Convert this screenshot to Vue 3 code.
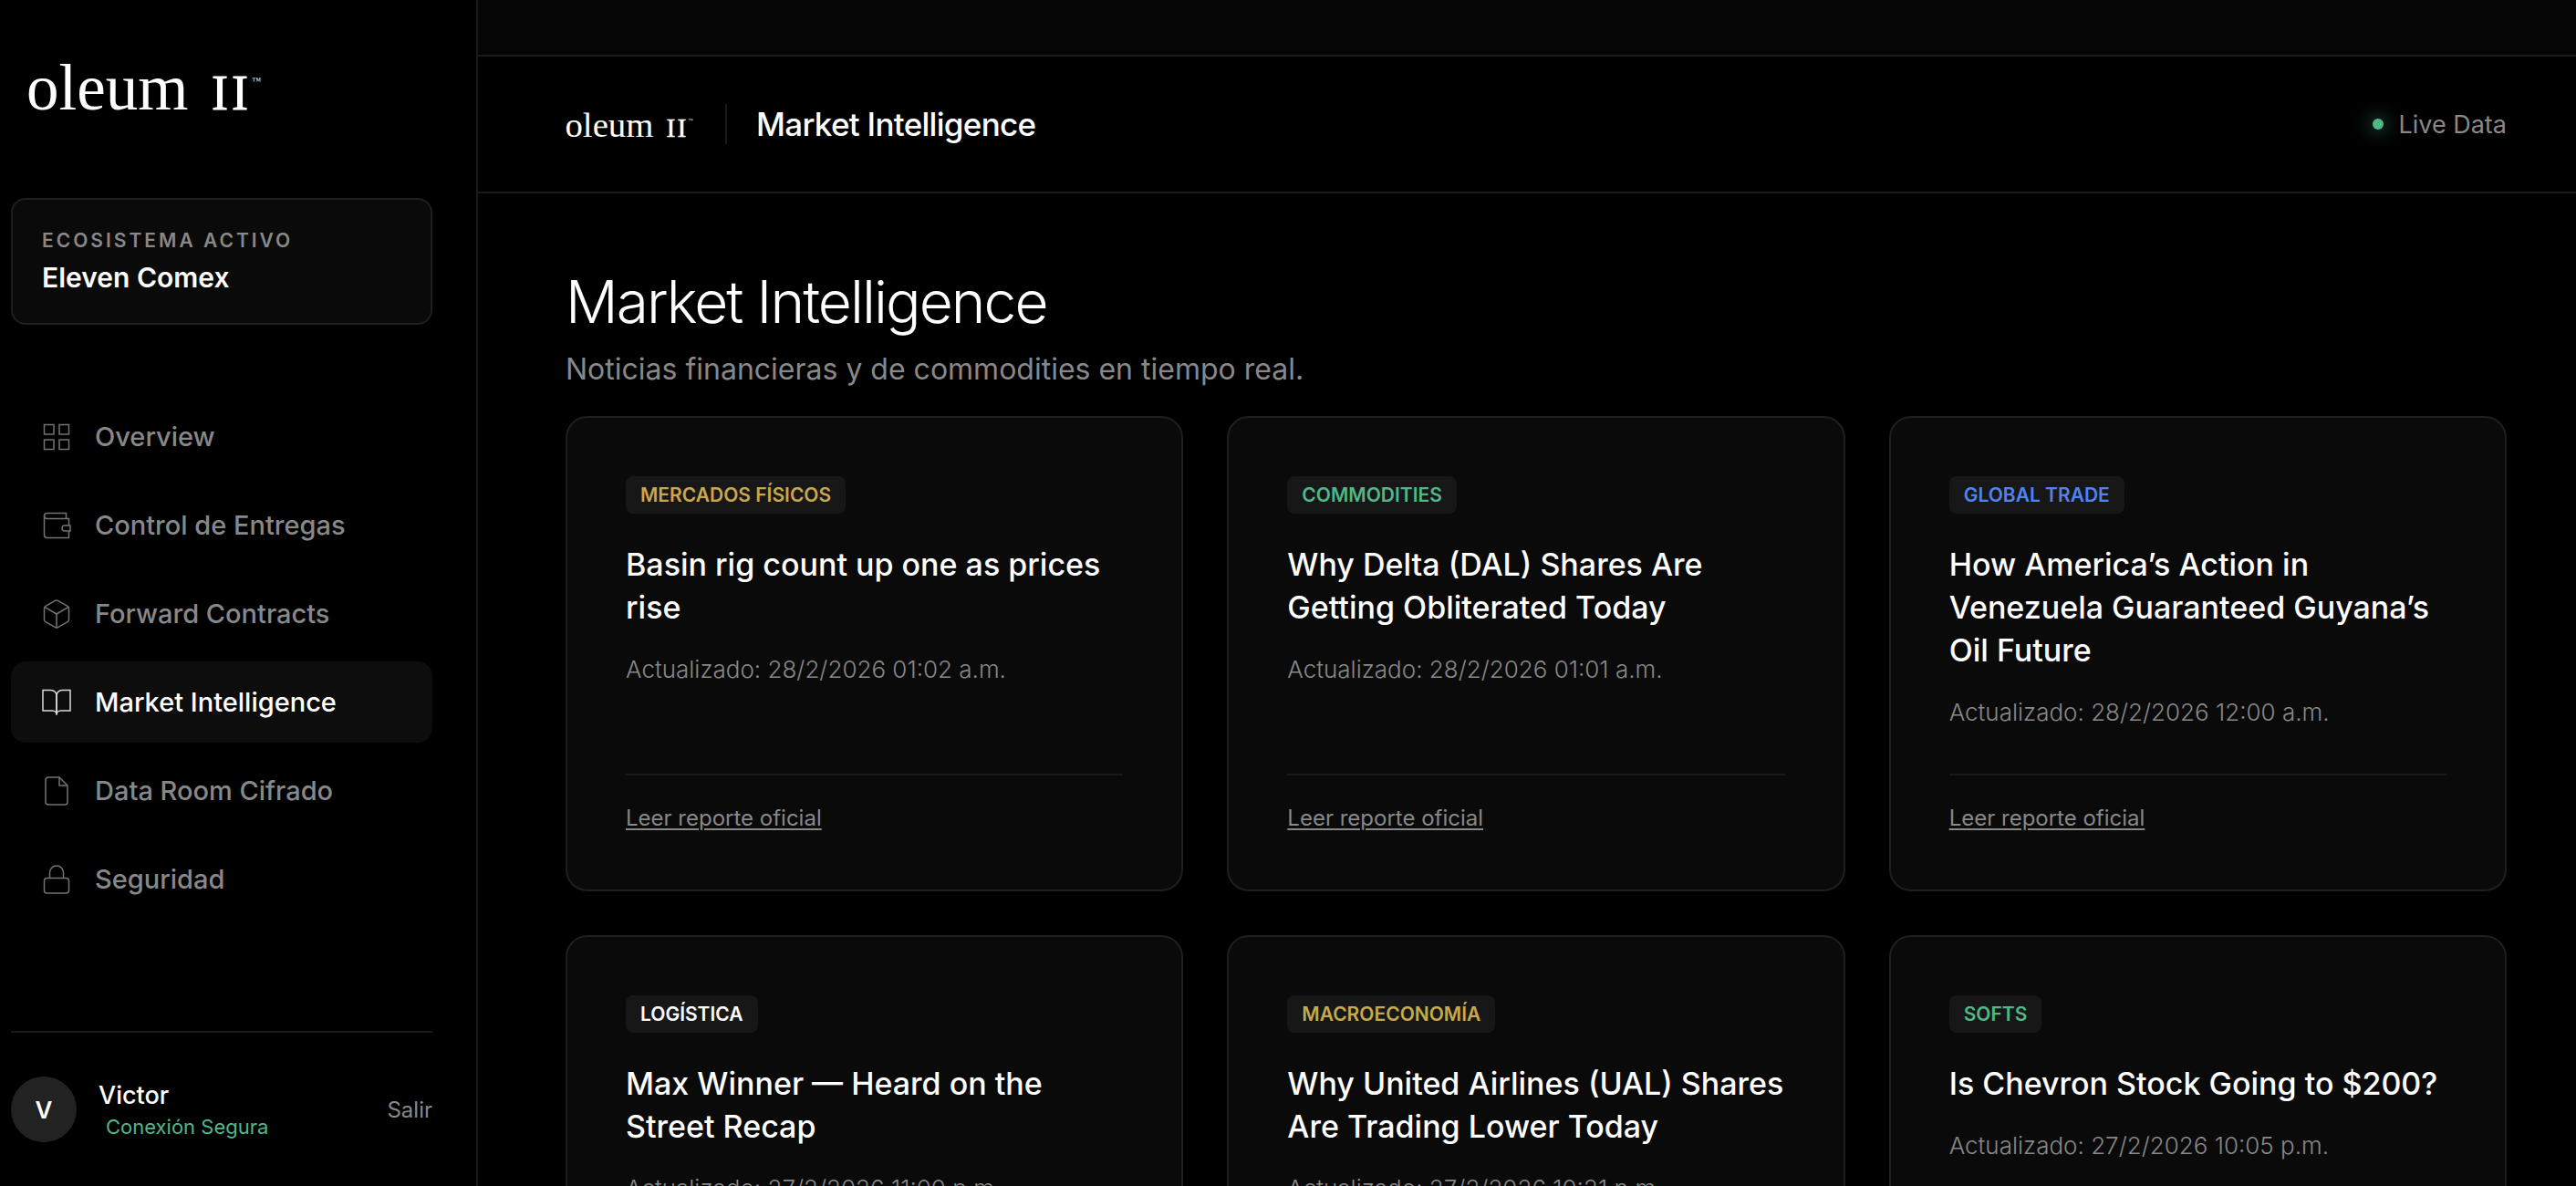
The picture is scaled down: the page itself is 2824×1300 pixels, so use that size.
<script setup>
import { ref } from 'vue'

const navItems = [
  { id: 'overview', label: 'Overview' },
  { id: 'entregas', label: 'Control de Entregas' },
  { id: 'forward', label: 'Forward Contracts' },
  { id: 'market', label: 'Market Intelligence' },
  { id: 'dataroom', label: 'Data Room Cifrado' },
  { id: 'seguridad', label: 'Seguridad' },
]
const active = ref('market')

const news = [
  { tag: 'Mercados Físicos', tone: 'gold', title: 'Basin rig count up one as prices rise', date: '28/2/2026 01:02 a.m.' },
  { tag: 'Commodities', tone: 'green', title: 'Why Delta (DAL) Shares Are Getting Obliterated Today', date: '28/2/2026 01:01 a.m.' },
  { tag: 'Global Trade', tone: 'blue', title: 'How America’s Action in Venezuela Guaranteed Guyana’s Oil Future', date: '28/2/2026 12:00 a.m.' },
  { tag: 'Logística', tone: 'white', title: 'Max Winner — Heard on the Street Recap', date: '27/2/2026 11:00 p.m.' },
  { tag: 'Macroeconomía', tone: 'gold', title: 'Why United Airlines (UAL) Shares Are Trading Lower Today', date: '27/2/2026 10:21 p.m.' },
  { tag: 'Softs', tone: 'green', title: 'Is Chevron Stock Going to $200?', date: '27/2/2026 10:05 p.m.' },
]
</script>

<template>
  <div class="layout">
    <aside class="sidebar">
      <!-- wordmark -->
      <svg class="logo" viewBox="0 0 256 54" role="img" aria-label="oleum II">
        <text class="logo-word" x="-1" y="52">oleum</text>
        <text class="logo-num" x="202" y="52">I</text>
        <text class="logo-num" x="224" y="52">I</text>
        <text class="logo-tm" x="246" y="24">™</text>
      </svg>

      <div class="ecosystem">
        <p class="ecosystem-label">Ecosistema activo</p>
        <p class="ecosystem-name">Eleven Comex</p>
      </div>

      <nav class="nav">
        <a
          v-for="item in navItems"
          :key="item.id"
          href="#"
          class="nav-item"
          :class="{ active: active === item.id }"
          @click.prevent="active = item.id"
        >
          <svg class="nav-icon" viewBox="0 0 24 24">
            <template v-if="item.id === 'overview'">
              <rect x="3" y="3" width="7" height="7" />
              <rect x="14" y="3" width="7" height="7" />
              <rect x="14" y="14" width="7" height="7" />
              <rect x="3" y="14" width="7" height="7" />
            </template>
            <template v-else-if="item.id === 'entregas'">
              <path d="M19 7V3H5a2 2 0 0 0 0 4h16v5" />
              <path d="M3 5v14a2 2 0 0 0 2 2h16v-5" />
              <path d="M18 12a2 2 0 0 0 0 4h4v-4z" />
            </template>
            <template v-else-if="item.id === 'forward'">
              <path d="M21 16V8a2 2 0 0 0-1-1.73l-7-4a2 2 0 0 0-2 0l-7 4A2 2 0 0 0 3 8v8a2 2 0 0 0 1 1.73l7 4a2 2 0 0 0 2 0l7-4A2 2 0 0 0 21 16z" />
              <path d="M3.27 6.96L12 12.01l8.73-5.05" />
              <path d="M12 22.08V12" />
            </template>
            <template v-else-if="item.id === 'market'">
              <path d="M2 3h6a4 4 0 0 1 4 4v14a3 3 0 0 0-3-3H2z" />
              <path d="M22 3h-6a4 4 0 0 0-4 4v14a3 3 0 0 1 3-3h7z" />
            </template>
            <template v-else-if="item.id === 'dataroom'">
              <path d="M14 2H6a2 2 0 0 0-2 2v16a2 2 0 0 0 2 2h12a2 2 0 0 0 2-2V8z" />
              <path d="M14 2v6h6" />
            </template>
            <template v-else>
              <rect x="3" y="11" width="18" height="11" rx="2" />
              <path d="M7 11V7a5 5 0 0 1 10 0v4" />
            </template>
          </svg>
          {{ item.label }}
        </a>
      </nav>

      <div class="user">
        <div class="avatar">V</div>
        <div class="user-info">
          <p class="user-name">Victor</p>
          <p class="user-status">Conexión Segura</p>
        </div>
        <button class="logout" type="button">Salir</button>
      </div>
    </aside>

    <main class="main">
      <div class="topbar"></div>
      <header class="header">
        <div class="header-left">
          <svg class="logo-small" viewBox="0 0 256 54" role="img" aria-label="oleum II">
            <text class="logo-word" x="-1" y="52">oleum</text>
            <text class="logo-num" x="202" y="52">I</text>
            <text class="logo-num" x="224" y="52">I</text>
            <text class="logo-tm" x="246" y="24">™</text>
          </svg>
          <span class="separator"></span>
          <span class="header-title">Market Intelligence</span>
        </div>
        <div class="live"><span class="dot"></span>Live Data</div>
      </header>

      <section class="content">
        <h1>Market Intelligence</h1>
        <p class="subtitle">Noticias financieras y de commodities en tiempo real.</p>

        <div class="grid">
          <article v-for="item in news" :key="item.title" class="card">
            <span class="tag" :class="item.tone">{{ item.tag }}</span>
            <h2>{{ item.title }}</h2>
            <p class="date">Actualizado: {{ item.date }}</p>
            <div class="card-footer">
              <a href="#" @click.prevent>Leer reporte oficial</a>
            </div>
          </article>
        </div>
      </section>
    </main>
  </div>
</template>

<style>
body {
  margin: 0;
  background: #000;
}
</style>

<style scoped>
.layout {
  display: flex;
  height: 100vh;
  background: #000;
  color: #fff;
  font-family: Inter, "Liberation Sans", sans-serif;
}
p,
h1,
h2 {
  margin: 0;
}

/* Sidebar */
.sidebar {
  display: flex;
  flex-direction: column;
  flex: 0 0 524px;
  box-sizing: border-box;
  padding: 68px 48px 48px 12px;
  border-right: 2px solid #1a1a1a;
}
.logo {
  width: 256px;
  height: 54px;
  margin: 0 0 95px 18px;
  overflow: visible;
}
.logo-word,
.logo-num,
.logo-tm {
  fill: #fff;
  font-family: "Liberation Serif", serif;
}
.logo-word {
  font-size: 71px;
}
.logo-num {
  font-size: 54px;
  stroke: #fff;
  stroke-width: 1;
}
.logo-tm {
  font-size: 10px;
}
.ecosystem {
  padding: 32px;
  border: 2px solid #1f1f1f;
  border-radius: 16px;
  background: #0a0a0a;
}
.ecosystem-label {
  color: #888;
  font-size: 21px;
  font-weight: 600;
  line-height: 25px;
  letter-spacing: 3px;
  text-transform: uppercase;
}
.ecosystem-name {
  margin-top: 10px;
  font-size: 30px;
  font-weight: 600;
  line-height: 36px;
}
.nav {
  display: flex;
  flex-direction: column;
  gap: 8px;
  margin-top: 78px;
}
.nav-item {
  display: flex;
  align-items: center;
  gap: 24px;
  height: 89px;
  padding: 0 32px;
  border-radius: 16px;
  color: #888;
  font-size: 29px;
  font-weight: 500;
  text-decoration: none;
}
.nav-item.active {
  background: #0d0d0d;
  color: #fff;
}
.nav-icon {
  width: 36px;
  height: 36px;
  fill: none;
  stroke: currentColor;
  stroke-width: 1;
  opacity: 0.85;
}
.user {
  display: flex;
  align-items: center;
  margin-top: auto;
  padding-top: 48px;
  border-top: 2px solid #1a1a1a;
}
.avatar {
  display: flex;
  align-items: center;
  justify-content: center;
  width: 72px;
  height: 72px;
  border-radius: 50%;
  background: #222;
  font-size: 26px;
  font-weight: 600;
}
.user-info {
  flex: 1;
  margin-left: 24px;
  padding-top: 2px;
}
.user-name {
  font-size: 27px;
  font-weight: 500;
  line-height: 36px;
}
.user-status {
  padding-left: 8px;
  color: #52b788;
  font-size: 22px;
  line-height: 32px;
}
.logout {
  padding: 0;
  border: none;
  background: none;
  color: #888;
  font-family: inherit;
  font-size: 24px;
  cursor: pointer;
}

/* Main */
.main {
  flex: 1;
  min-width: 0;
  overflow-y: auto;
  scrollbar-width: none;
}
.topbar {
  height: 60px;
  border-bottom: 2px solid #1a1a1a;
  background: #050505;
}
.header {
  display: flex;
  align-items: center;
  justify-content: space-between;
  padding: 48px 76px 48px 96px;
  border-bottom: 2px solid #1a1a1a;
}
.header-left {
  display: flex;
  align-items: center;
}
.logo-small {
  width: 140px;
  height: 30px;
  overflow: visible;
}
.separator {
  width: 2px;
  height: 44px;
  margin: 0 32px 0 35px;
  background: #1a1a1a;
}
.header-title {
  font-size: 35px;
  font-weight: 500;
  line-height: 52px;
  letter-spacing: -0.02em;
}
.live {
  display: flex;
  align-items: center;
  gap: 16px;
  color: #888;
  font-size: 27px;
}
.dot {
  width: 12px;
  height: 12px;
  border-radius: 50%;
  background: #52b788;
  box-shadow: 0 0 20px #52b788;
}
.content {
  padding: 80px 76px 80px 96px;
}
h1 {
  font-size: 64px;
  font-weight: 300;
  line-height: 77px;
  letter-spacing: -0.03em;
}
.subtitle {
  margin-top: 16px;
  color: #888;
  font-size: 32px;
  line-height: 39px;
}
.grid {
  display: grid;
  grid-template-columns: repeat(3, 1fr);
  gap: 48px;
  margin-top: 32px;
}
.card {
  display: flex;
  flex-direction: column;
  align-items: flex-start;
  padding: 64px;
  border: 2px solid #1f1f1f;
  border-radius: 24px;
  background: #0a0a0a;
}
.tag {
  padding: 8px 16px;
  border-radius: 8px;
  background: #171717;
  font-size: 21px;
  font-weight: 600;
  line-height: 25px;
  text-transform: uppercase;
}
.gold {
  color: #c9a84c;
}
.green {
  color: #52b788;
}
.blue {
  color: #4f83f1;
}
.white {
  color: #fff;
}
h2 {
  margin-top: 32px;
  font-size: 34px;
  font-weight: 500;
  line-height: 47px;
}
.date {
  margin: 24px 0 46px;
  color: #888;
  font-size: 26px;
  font-weight: 300;
  line-height: 42px;
}
.card-footer {
  align-self: stretch;
  margin-top: auto;
  padding-top: 32px;
  border-top: 2px solid #1a1a1a;
  font-size: 24px;
  line-height: 29px;
}
.card-footer a {
  color: #888;
  text-decoration-thickness: 2px;
  text-underline-offset: 3px;
}
</style>
